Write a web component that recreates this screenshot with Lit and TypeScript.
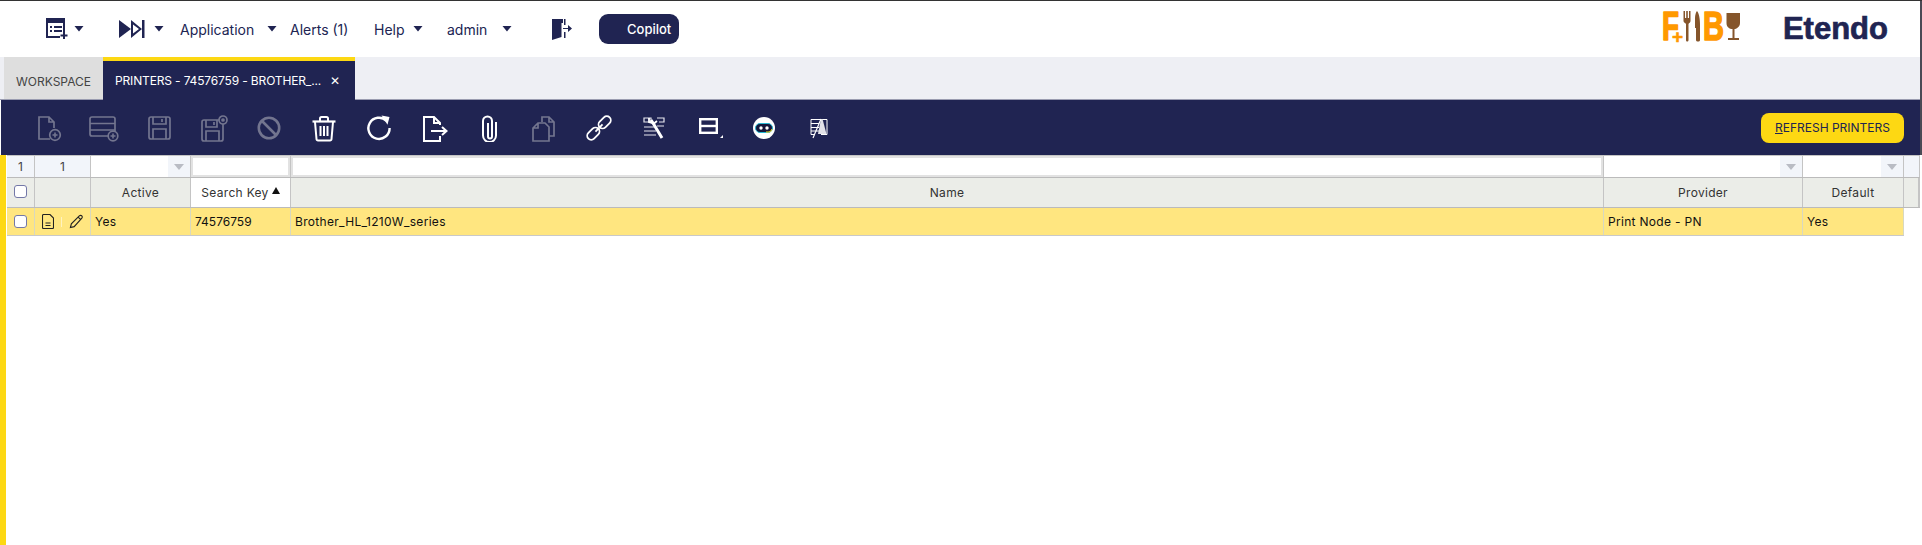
import { LitElement, html, css, svg } from "lit";
import { customElement } from "lit/decorators.js";

const caret = html`<svg class="caret" width="10" height="6" viewBox="0 0 10 6"><path d="M.5 0h9L5 5.500z" fill="#202452"/></svg>`;

const s = (body: unknown, w = 28, h = 28, vb = "0 0 28 28") =>
  html`<svg width=${w} height=${h} viewBox=${vb} fill="none" stroke="currentColor" stroke-width="1.7">${body}</svg>`;

const plusBadge = (cx: number, cy: number, r = 5) => svg`<circle cx=${cx} cy=${cy} r=${r} fill="#202452"/><path d="M${cx - 2.5} ${cy}h5M${cx} ${cy - 2.5}v5" stroke-width="1.6"/>`;

const icons = [
  { off: true, i: s(svg`<path d="M19 14V8l-5-5H4v22h11M14 3v5h5"/>${plusBadge(20, 21, 5.3)}`) },
  { off: true, i: s(svg`<rect x="1" y="3" width="25" height="19" rx="2"/><path d="M1 9.500h25M1 16h25"/>${plusBadge(24, 22, 4.8)}`, 30, 28, "0 0 30 28") },
  { off: true, i: s(svg`<rect x="4" y="3" width="21" height="22" rx="2"/><path d="M8 3v7h13V3M8 25V15h13v10M17 5v3"/>`) },
  { off: true, i: s(svg`<rect x="2" y="6" width="21" height="21" rx="2"/><path d="M6 6v7h11V6M6 27V17h13v10M14 8v3"/><circle cx="23" cy="6" r="4" fill="#202452"/><circle cx="23" cy="6" r="1" fill="currentColor"/>`) },
  { off: true, i: s(svg`<circle cx="14" cy="14" r="10.200" stroke-width="2.600"/><path d="M7 7l14 14" stroke-width="2.600"/>`) },
  { off: false, i: s(svg`<path d="M2.500 7.500h23" stroke-width="2.200"/><path d="M10 7V4.500A1.500 1.500 0 0 1 11.500 3h5A1.500 1.500 0 0 1 18 4.500V7M5 8l1.500 17a1.500 1.500 0 0 0 1.500 1.500h12a1.500 1.500 0 0 0 1.500-1.500L23 8M10.500 12v10M14 12v10M17.500 12v10" stroke-width="2"/>`) },
  { off: false, i: s(svg`<path d="M21.500 6.800A10.600 10.600 0 1 0 24.600 14" stroke-width="2.400"/><path d="M16.500 1.500l8 1.600-2 7.600z" fill="currentColor" stroke="none"/>`) },
  { off: false, i: s(svg`<path d="M21 11V9l-6-6H5v24h16v-5M15 3v6h6M12 17h15M23 13l4.500 4-4.500 4" stroke-width="2"/>`, 30, 28, "0 0 30 28") },
  { off: false, i: s(svg`<path d="M11 9v13.500a2 2 0 0 0 4 0V7a4.500 4.500 0 0 0-9 0v14.500a6.500 6.500 0 0 0 13 0V8" stroke-width="2"/>`, 20, 28, "2 0 20 28") },
  { off: true, i: s(svg`<path d="M15 9H8l-5 5v13h16V13zM8 9v5H3M12 8V3h7l5 5v14h-5M19 3v5h5"/>`) },
  { off: false, i: s(svg`<g transform="rotate(-45 14 14)" stroke-width="1.800"><rect x="-1" y="10" width="14" height="8" rx="4"/><rect x="15" y="10" width="14" height="8" rx="4"/><path d="M9 14h10"/></g>`) },
  { off: false, i: html`<svg width="22" height="22" viewBox="0 0 22 22" fill="none" stroke="#e6e6ee" stroke-width="1.200"><path d="M1 1h7v4H1zM14 1h7v4h-5M14 9h7M1 10h10M1 14h12M1 18h12"/><path d="M8 3l2 3 9 15" stroke="#fff" stroke-width="3"/><path d="M6 1l0 4 5 1.500 3-2.500" stroke="#fff" stroke-width="1.800"/></svg>` },
  { off: false, i: html`<svg width="32" height="24" viewBox="0 -2 32 24" fill="none" stroke="#fff"><rect x="7.200" y="1.200" width="16.600" height="13.600" stroke-width="2.400"/><path d="M7 8h17" stroke-width="2.400"/><path d="M30 17v3h-3z" fill="#fff" stroke="none"/></svg>` },
  { off: false, i: html`<svg width="24" height="24" viewBox="0 0 24 24"><circle cx="12" cy="12" r="11" fill="#fff"/><rect x="3.500" y="7.500" width="17" height="9" rx="4.500" fill="#15163a" stroke="#25b7d3" stroke-width="1"/><path d="M20 13a4 4 0 0 1-3 3h-3" stroke="#fdd813" fill="none"/><circle cx="9" cy="12" r="1.700" fill="#fff"/><circle cx="15" cy="12" r="1.700" fill="#fff"/></svg>` },
  { off: false, i: html`<svg width="20" height="22" viewBox="0 0 20 22" fill="none" stroke="#fff" stroke-width="1"><path d="M10 2.500h8v15h-6"/><path d="M10 2.500H2v15h3M2 6.500h8M2 10.500h8M2 14h8"/><path d="M12 2h1.500l4 15H9z" fill="#e2e2e8" stroke="none"/><path d="M12 2L4 21" stroke-width="1.200"/></svg>` },
];

@customElement("app-root")
export class AppRoot extends LitElement {
  static styles = css`
    :host { display: block; width: 1922px; height: 545px; background: #fff; font-family: Inter, "Noto Sans", sans-serif; color: #202452; overflow: hidden; }
    .frame { height: 545px; display: flex; flex-direction: column; border-top: 1px solid #333; box-sizing: border-box; }
    .top { flex: none; border-right: 2px solid #4a4a55; }
    .nav { height: 56px; display: flex; align-items: center; font-size: 14px; color: #202452; }
    .nav > * { flex: none; }
    .caret { display: block; }
    .gi { display: flex; align-items: center; }
    .g1 { margin-left: 46px; gap: 6px; }
    .g2 { margin-left: 35px; gap: 9px; }
    .app { margin-left: 16px; width: 75px; }
    .c1 { margin-left: 12px; }
    .alerts { margin-left: 13px; width: 60px; }
    .help { margin-left: 24px; width: 32px; }
    .c3 { margin-left: 7px; }
    .admin { margin-left: 24px; width: 46px; }
    .c4 { margin-left: 9px; }
    .logout { margin-left: 40px; display: block; }
    .copilot { margin-left: 27px; width: 80px; height: 30px; border-radius: 9px; background: #202452; color: #fff; font-size: 13px; font-weight: 500; display: flex; align-items: center; padding-left: 28px; box-sizing: border-box; }
    .logos { margin-left: auto; margin-right: 32px; display: flex; align-items: center; gap: 42px; }
    .fb { display: block; }
    .fb text { font-family: "Liberation Sans", sans-serif; font-weight: 700; stroke-width: 1.600; stroke-linejoin: round; }
    .fb .plus { stroke-width: 0.600; }
    .etendo { font-family: "Liberation Sans", sans-serif; font-weight: 700; font-size: 31px; line-height: 36px; color: #202452; -webkit-text-stroke: 0.7px #202452; }
    .tabs { height: 43px; box-sizing: border-box; background: #eeeff4; display: flex; align-items: stretch; padding-left: 4px; border-bottom: 1px solid #9a9cb0; }
    .tab { display: flex; align-items: center; font-size: 12px; box-sizing: border-box; }
    .ws { width: 99px; background: #dedede; color: #444; justify-content: center; padding-top: 7px; }
    .cur { width: 252px; margin-bottom: -1px; background: #202452; color: #fff; border-top: 4px solid #fdd813; padding: 0 15px 0 12px; justify-content: space-between; white-space: nowrap; letter-spacing: -0.15px; }
    .toolbar { height: 55px; margin-left: 1px; background: #202452; display: flex; align-items: center; padding-left: 20px; box-sizing: border-box; }
    .tb { width: 55px; height: 32px; flex: none; display: flex; align-items: center; justify-content: center; color: #fff; }
    .tb.off { color: #73758f; }
    .refresh { margin-left: auto; margin-right: 16px; width: 143px; height: 30px; border-radius: 8px; background: #fdd813; color: #202452; font-size: 12px; display: flex; align-items: center; justify-content: center; }
    .body { flex: 1; display: flex; min-height: 0; }
    .stripe { width: 6px; background: #fdd813; flex: none; }
    .grid { flex: none; width: 1913px; margin-left: 1px; font-size: 12px; letter-spacing: 0.3px; color: #222; border-top: 1px solid #c4c4c4; align-self: flex-start; }
    .row { display: grid; grid-template-columns: 28px 56px 100px 100px 1313px 199px 101px 16px; }
    .filter { height: 22px; background: #f2f5fa; border-bottom: 1px solid #bbb; box-sizing: border-box; }
    .filter > div { border-right: 1px solid #c4c4c4; box-sizing: border-box; display: flex; align-items: stretch; }
    .filter .n { align-items: center; justify-content: center; color: #444; }
    .fi { flex: 1; background: #fff; }
    .fi.nd { border: 2px solid #e2e2e2; }
    .fd { width: 22px; display: flex; align-items: center; justify-content: center; }
    .fd svg { display: block; }
    .head { height: 30px; background: #ebede8; border-bottom: 1px solid #bbb; box-sizing: border-box; }
    .head > div { border-right: 1px solid #c4c4c4; display: flex; align-items: center; justify-content: center; color: #333; }
    .head .sorted { background: #fff; gap: 3px; }
    .sorted svg { margin-bottom: 4px; }
    .head .last { border-right: 2px solid #c4c4c4; }
    .head .cb { margin-bottom: 3px; }
    .data { height: 28px; width: 1897px; background: #ffe680; border-bottom: 1px solid #c9c9c9; box-sizing: border-box; grid-template-columns: 28px 56px 100px 100px 1313px 199px 101px; }
    .data > div { border-right: 1px solid #d8d8c0; display: flex; align-items: center; padding-left: 4px; box-sizing: border-box; color: #111; }
    .num { letter-spacing: 0; }
    .cb { width: 11px; height: 11px; background: #fff; border: 1px solid #7378a8; border-radius: 3px; }
    .data .cbc { justify-content: center; padding-left: 0; }
    .data .acts { padding-left: 7px; }
    .sep { width: 1px; height: 10px; background: #fff3c0; margin: 0 7px 0 7px; }
  `;

  render() {
    const drop = html`<div class="fd"><svg width="10" height="6" viewBox="0 0 10 6"><path d="M0 0h10L5 6z" fill="#b9bcc4"/></svg></div>`;
    return html`<div class="frame">
      <div class="top">
      <div class="nav">
        <div class="gi g1">
          <svg width="22" height="22" viewBox="0 0 22 22" fill="#202452"><path d="M0 0h19v5H0zM0 5h2v15H0zM2 18h12v2H2zM17 5h2v9h-2z"/><path d="M4 8h2v2H4zM8 8h8v2H8zM4 12h2v2H4zM8 12h8v2H8z"/><path d="M17 14h2v2.500h2.500v2H19V21h-2v-2.500h-2.500v-2H17z"/></svg>
          ${caret}
        </div>
        <div class="gi g2">
          <svg width="26" height="20" viewBox="0 0 26 20" fill="#202452"><path d="M0 1l12 9-12 9z"/><path d="M12 1l11 9-11 9zM14 5.500v9l6-4.500z" fill-rule="evenodd"/><path d="M23 1h2.500v18H23z"/></svg>
          ${caret}
        </div>
        <span class="app">Application</span><span class="c1">${caret}</span>
        <span class="alerts">Alerts (1)</span>
        <span class="help">Help</span><span class="c3">${caret}</span>
        <span class="admin">admin</span><span class="c4">${caret}</span>
        <svg class="logout" width="20" height="22" viewBox="0 0 20 22" fill="#202452"><path d="M0 1h11v4H9.500V19L0 22z"/><path d="M12 1h1.500v6H12zM12 14h1.500v6H12zM11 10h5V7l4 3.500-4 3.500v-3h-5z"/></svg>
        <div class="copilot">Copilot</div>
        <div class="logos">
          <svg class="fb" width="80" height="50" viewBox="0 -6 80 50">
            <text x="1" y="30" font-size="41" fill="#ff9900" stroke="#ff9900" textLength="17" lengthAdjust="spacingAndGlyphs">F</text>
            <text class="plus" x="11" y="33" font-size="19" fill="#ff9900" stroke="#ff9900">+</text>
            <g fill="#85552b"><path d="M22.500 1h1.500v7h1.200V1h1.600v7h1.200V1h1.500v10c0 1.500-1.500 2-2 3v16c0 2-2.500 2-2.500 0V14c-.5-1-2.500-1.500-2.500-3z"/><path d="M36 1c2 2 3 8 3 14v15c0 2-4 2-4 0V18h-1V8c0-3 1-6 2-7z"/><path d="M65.500 3H79v10c0 4-4 6-5.500 6v9H78v2H67v-2h4.500v-9c-3-0-6-2-6-6z"/></g>
            <text x="42" y="30" font-size="41" fill="#ff9900" stroke="#ff9900" textLength="21" lengthAdjust="spacingAndGlyphs">B</text>
          </svg>
          <span class="etendo">Etendo</span>
        </div>
      </div>
      <div class="tabs">
        <div class="tab ws">WORKSPACE</div>
        <div class="tab cur"><span>PRINTERS - 74576759 - BROTHER_...</span><span>✕</span></div>
      </div>
      <div class="toolbar">
        ${icons.map((b) => html`<div class="tb ${b.off ? "off" : ""}">${b.i}</div>`)}
        <div class="refresh"><span><u>R</u>EFRESH PRINTERS</span></div>
      </div>
      </div>
      <div class="body">
        <div class="stripe"></div>
        <div class="grid">
          <div class="row filter">
            <div class="n">1</div><div class="n">1</div>
            <div><div class="fi"></div>${drop}</div>
            <div><div class="fi nd"></div></div>
            <div><div class="fi nd"></div></div>
            <div><div class="fi"></div>${drop}</div>
            <div><div class="fi"></div>${drop}</div>
            <div></div>
          </div>
          <div class="row head">
            <div><div class="cb"></div></div><div></div>
            <div>Active</div>
            <div class="sorted">Search Key <svg width="8" height="7" viewBox="0 0 8 7"><path d="M4 0l4 7H0z" fill="#111"/></svg></div>
            <div>Name</div><div>Provider</div><div>Default</div><div class="last"></div>
          </div>
          <div class="row data">
            <div class="cbc"><div class="cb"></div></div>
            <div class="acts">
              <svg width="12" height="15" viewBox="0 0 12 15" fill="none" stroke="#222" stroke-width="1.100"><path d="M8 .5H1.500a1 1 0 0 0-1 1v12a1 1 0 0 0 1 1h9a1 1 0 0 0 1-1V4zM3.500 9h5M3.500 11.500h5"/></svg>
              <div class="sep"></div>
              <svg width="15" height="15" viewBox="0 0 16 16" fill="none" stroke="#222" stroke-width="1.200"><path d="M1.500 14.500l1-4L11 2c.8-.8 2-.8 2.700 0s.6 1.800 0 2.500L5.500 13.500zM10 3.500l2.800 2.800"/></svg>
            </div>
            <div>Yes</div><div class="num">74576759</div><div>Brother_HL_1210W_series</div><div>Print Node - PN</div><div>Yes</div>
          </div>
        </div>
      </div>
    </div>`;
  }
}
